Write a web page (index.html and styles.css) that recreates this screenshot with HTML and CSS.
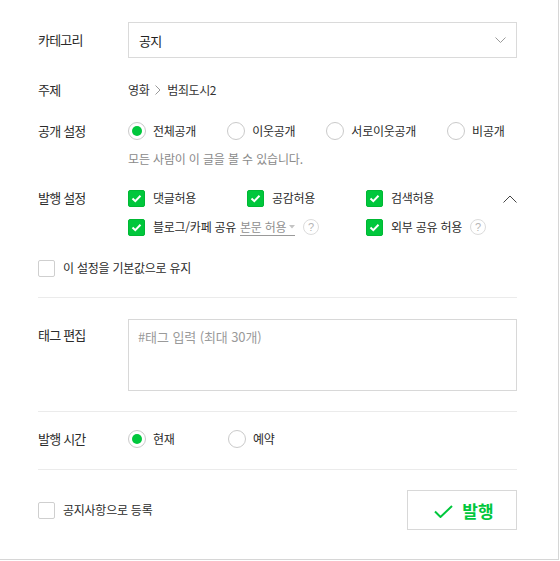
FILE: index.html
```html
<!DOCTYPE html>
<html lang="ko">
<head>
<meta charset="utf-8">
<link rel="stylesheet" href="styles.css">
</head>
<body>
<div class="panel">
  <div class="row row-category">
    <div class="label">카테고리</div>
    <div class="select">
      <span>공지</span>
      <svg class="sel-arrow" width="11" height="7" viewBox="0 0 11 7"><polyline points="0.5,0.5 5.5,5.5 10.5,0.5" fill="none" stroke="#9a9a9a" stroke-width="1"/></svg>
    </div>
  </div>

  <div class="row row-topic">
    <div class="label">주제</div>
    <div class="topic">영화 <svg class="topic-arrow" width="6" height="10" viewBox="0 0 6 10"><polyline points="0.5,0.5 5,5 0.5,9.5" fill="none" stroke="#999" stroke-width="1"/></svg> 범죄도시2</div>
  </div>

  <div class="row row-open">
    <div class="label">공개 설정</div>
    <div class="opts">
      <label class="radio on"><span class="dot"></span><span class="txt">전체공개</span></label>
      <label class="radio"><span class="dot"></span><span class="txt">이웃공개</span></label>
      <label class="radio"><span class="dot"></span><span class="txt">서로이웃공개</span></label>
      <label class="radio"><span class="dot"></span><span class="txt">비공개</span></label>
    </div>
  </div>
  <div class="desc">모든 사람이 이 글을 볼 수 있습니다.</div>

  <div class="row row-publish">
    <div class="label">발행 설정</div>
    <div class="pub-grid">
      <label class="check on"><span class="box"><svg width="17" height="17" viewBox="0 0 17 17"><polyline points="4.5,8.5 7.3,11.2 12.5,5.8" fill="none" stroke="#fff" stroke-width="2"/></svg></span><span class="txt">댓글허용</span></label>
      <label class="check on"><span class="box"><svg width="17" height="17" viewBox="0 0 17 17"><polyline points="4.5,8.5 7.3,11.2 12.5,5.8" fill="none" stroke="#fff" stroke-width="2"/></svg></span><span class="txt">공감허용</span></label>
      <label class="check on"><span class="box"><svg width="17" height="17" viewBox="0 0 17 17"><polyline points="4.5,8.5 7.3,11.2 12.5,5.8" fill="none" stroke="#fff" stroke-width="2"/></svg></span><span class="txt">검색허용</span></label>
      <span class="caret"><svg width="14" height="8" viewBox="0 0 14 8"><polyline points="0.5,7.5 7,1 13.5,7.5" fill="none" stroke="#444" stroke-width="1"/></svg></span>
      <label class="check on span2"><span class="box"><svg width="17" height="17" viewBox="0 0 17 17"><polyline points="4.5,8.5 7.3,11.2 12.5,5.8" fill="none" stroke="#fff" stroke-width="2"/></svg></span><span class="txt">블로그/카페 공유</span><span class="scope">본문 허용<svg width="6" height="4" viewBox="0 0 6 4"><polygon points="0,0 6,0 3,3.5" fill="#c4c4c4"/></svg></span><span class="help">?</span></label>
      <label class="check on"><span class="box"><svg width="17" height="17" viewBox="0 0 17 17"><polyline points="4.5,8.5 7.3,11.2 12.5,5.8" fill="none" stroke="#fff" stroke-width="2"/></svg></span><span class="txt">외부 공유 허용</span><span class="help">?</span></label>
    </div>
  </div>

  <label class="check default-row"><span class="box"></span><span class="txt">이 설정을 기본값으로 유지</span></label>

  <div class="divider first"></div>

  <div class="row row-tag">
    <div class="label">태그 편집</div>
    <div class="tagbox">#태그 입력 (최대 30개)</div>
  </div>

  <div class="divider"></div>

  <div class="row row-time">
    <div class="label">발행 시간</div>
    <div class="opts">
      <label class="radio on fixed"><span class="dot"></span><span class="txt">현재</span></label>
      <label class="radio fixed"><span class="dot"></span><span class="txt">예약</span></label>
    </div>
  </div>

  <div class="divider"></div>

  <div class="footer">
    <label class="check"><span class="box"></span><span class="txt">공지사항으로 등록</span></label>
    <button class="publish"><svg width="19" height="13" viewBox="0 0 19 13"><polyline points="1,6.5 6.5,12 18,1" fill="none" stroke="#00c73c" stroke-width="2"/></svg><span>발행</span></button>
  </div>
</div>
</body>
</html>
```

FILE: styles.css
```css
* { box-sizing: border-box; }
html, body { margin: 0; padding: 0; background: #fff; }
body {
  font-family: "Noto Sans CJK KR", "Noto Sans", sans-serif;
  color: #333;
}
.panel {
  width: 559px;
  height: 560px;
  padding: 22px 41px 0 38px;
  border-right: 1px solid #d6d6d6;
  border-bottom: 1px solid #d6d6d6;
}
.row { display: flex; align-items: flex-start; }
.label {
  width: 90px;
  flex: none;
  font-size: 13px;
  line-height: 20px;
  letter-spacing: -0.8px;
  color: #2b2b2b;
}
.row-category { align-items: center; height: 36px; }
.select {
  flex: 1;
  height: 36px;
  border: 1px solid #dadada;
  display: flex;
  align-items: center;
  justify-content: space-between;
  padding: 0 10px 0 10px;
  font-size: 13px;
  letter-spacing: -0.6px;
  color: #222;
}
.sel-arrow { display: block; }

.row-topic { margin-top: 22px; }
.topic {
  font-size: 12px;
  line-height: 20px;
  letter-spacing: -0.4px;
  color: #333;
  display: flex;
  align-items: center;
  gap: 4px;
}
.topic-arrow { display: block; margin: 0 2px; }

.row-open { margin-top: 21px; }
.opts { display: flex; gap: 31px; align-items: center; height: 20px; }
.radio { display: flex; align-items: center; cursor: pointer; }
.radio .dot {
  width: 18px;
  height: 18px;
  border: 1px solid #cacaca;
  border-radius: 50%;
  display: flex;
  align-items: center;
  justify-content: center;
  background: #fff;
}
.radio.on .dot::after {
  content: "";
  width: 10px;
  height: 10px;
  border-radius: 50%;
  background: #00c73c;
}
.txt {
  font-size: 12px;
  line-height: 20px;
  letter-spacing: -0.25px;
  color: #2b2b2b;
  margin-left: 7px;
  white-space: nowrap;
}
.radio.fixed { width: 100px; }
.row-time .opts { gap: 0; }

.desc {
  margin: 9px 0 0 90px;
  font-size: 12px;
  line-height: 18px;
  letter-spacing: -0.15px;
  color: #8a8a8a;
}

.row-publish { margin-top: 20px; }
.pub-grid {
  flex: 1;
  display: grid;
  grid-template-columns: 119px 119px 1fr auto;
  row-gap: 9px;
}
.check { display: flex; align-items: center; height: 20px; cursor: pointer; }
.check .box {
  width: 17px;
  height: 17px;
  flex: none;
  border: 1px solid #cfcfcf;
  border-radius: 2px;
  background: #fff;
  position: relative;
}
.check.on .box { background: #00c73c; border-color: #00b834; }
.check .box svg { position: absolute; left: -1px; top: -1px; display: block; }
.check .txt { margin-left: 8px; }
.span2 { grid-column: 1 / span 2; }
.caret { display: flex; align-items: center; justify-content: flex-end; height: 20px; padding-top: 2px; }
.caret svg { display: block; }
.scope {
  font-size: 12px;
  line-height: 16px;
  letter-spacing: -0.3px;
  color: #8f8f8f;
  margin-left: 4px;
  border-bottom: 1px solid #9a9a9a;
  display: inline-flex;
  align-items: center;
  gap: 3px;
}
.help {
  width: 16px;
  height: 16px;
  border: 1px solid #dcdcdc;
  border-radius: 50%;
  margin-left: 8px;
  font-family: "Liberation Sans", Arial, sans-serif;
  font-size: 11px;
  line-height: 14px;
  text-align: center;
  color: #b5b5b5;
}

.default-row { margin-top: 21px; height: 20px; }

.divider { height: 1px; background: #ebebeb; margin-top: 19px; }

.row-tag { margin-top: 21px; }
.row-tag .label { padding-top: 6px; }
.tagbox {
  flex: 1;
  height: 72px;
  border: 1px solid #d8d8d8;
  padding: 7px 9px;
  font-size: 13px;
  line-height: 20px;
  letter-spacing: -0.1px;
  color: #9a9a9a;
}
.row-tag + .divider { margin-top: 20px; }

.row-time { margin-top: 17px; }
.row-time + .divider { margin-top: 20px; }

.footer {
  margin-top: 20px;
  display: flex;
  align-items: center;
  justify-content: space-between;
}
.publish {
  width: 110px;
  height: 40px;
  border: 1px solid #d8d8d8;
  background: #fff;
  display: flex;
  align-items: center;
  justify-content: center;
  gap: 9px;
  padding: 0 0 0 4px;
  font-family: "Noto Sans CJK KR", sans-serif;
  font-size: 17px;
  font-weight: 700;
  letter-spacing: 0;
  color: #00c73c;
  cursor: pointer;
}
.publish svg { display: block; margin-top: 2px; }
```
